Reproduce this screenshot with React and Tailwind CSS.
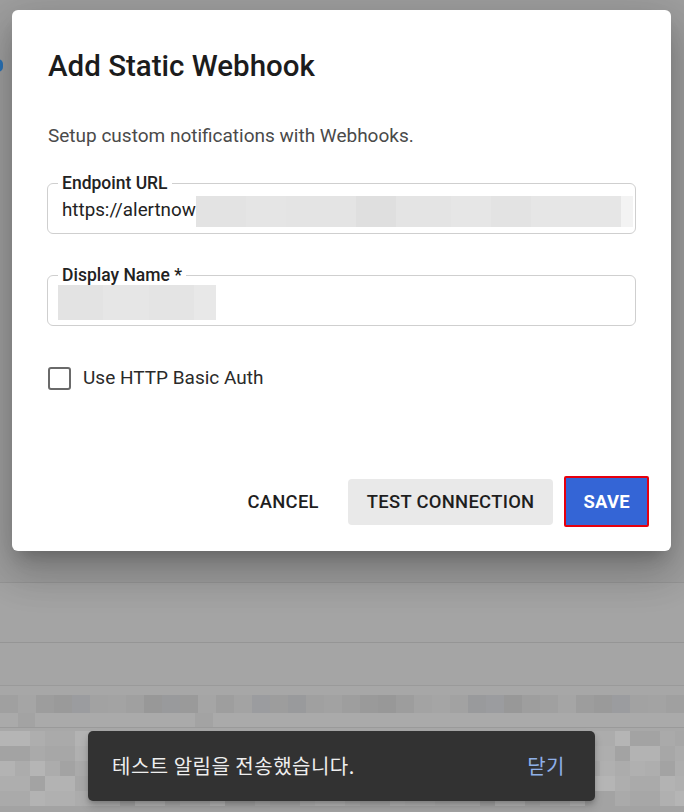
import React from "react";

const bandColors = [
  "bg-[#9d9d9d]", "bg-[#a2a2a2]", "bg-[#989898]", "bg-[#a5a5a5]", "bg-[#9b9c9f]",
  "bg-[#a0a0a0]", "bg-[#9a9a9a]", "bg-[#a3a3a3]", "bg-[#999a9c]", "bg-[#9e9e9e]",
];
const lightColors = [
  "bg-[#acacac]", "bg-[#b0b0b0]", "bg-[#a7a7a7]", "bg-[#b3b3b3]", "bg-[#aaaaaa]",
  "bg-[#a3a3a3]", "bg-[#aeaeae]", "bg-[#b5b5b5]",
];

function Mosaic({ cols, cellW, cellH, rows, palette, seed }) {
  const out = [];
  for (let r = 0; r < rows; r++) {
    const cells = [];
    for (let c = 0; c < cols; c++) {
      const idx = (c * 7 + r * 13 + seed * 5 + ((c * c + r) % 3)) % palette.length;
      cells.push(<div key={c} className={`shrink-0 ${palette[idx]} ${cellW}`} />);
    }
    out.push(
      <div key={r} className={`flex ${cellH}`}>
        {cells}
      </div>
    );
  }
  return <div className="flex flex-col">{out}</div>;
}

function Field({ label, children }) {
  return (
    <fieldset className="border border-[#cfcfcf] rounded-[6px] px-0 pb-[6px] m-0">
      <legend className="ml-[10px] px-[4px] text-[17.5px] leading-[20px] font-medium text-[#222]">
        {label}
      </legend>
      <div className="h-[34px] flex items-center">{children}</div>
    </fieldset>
  );
}

export default function App() {
  return (
    <div
      className="relative w-[684px] h-[812px] overflow-hidden bg-[#a3a3a3]"
      style={{ fontFamily: "Roboto, 'Noto Sans CJK KR', sans-serif" }}
    >
      {/* background page */}
      <div className="flex flex-col">
        <div className="h-[582px] bg-[#9f9f9f]" />
        <div className="h-[60px] border-t border-[#959595] bg-[#a4a4a4]" />
        <div className="h-[43px] border-t border-[#959595] bg-[#a5a5a5]" />
        <div className="h-[10px] border-t border-[#9a9a9a] bg-[#a7a7a7]" />
        <Mosaic cols={38} cellW="w-[18px]" cellH="h-[18px]" rows={1} palette={bandColors} seed={1} />
        <div className="h-[14px] bg-[#aaaaaa] flex">
          <div className="w-[18px]" />
          <div className="w-[17px] bg-[#a3a3a3]" />
          <div className="w-[160px]" />
          <div className="w-[18px] bg-[#a3a3a3]" />
        </div>
        <div className="h-[4px] border-t border-[#9a9a9a] bg-[#a8a8a8]" />
        <Mosaic cols={46} cellW="w-[15px]" cellH="h-[15px]" rows={5} palette={lightColors} seed={3} />
      </div>

      {/* partial icon at left edge */}
      <div className="absolute left-[-7px] top-[59px] w-[10px] h-[13px] rounded-full bg-[#2a73b8]" />

      {/* dialog */}
      <div className="absolute left-[12px] top-[10px] w-[659px] h-[541px] bg-white rounded-[6px] shadow-[0_11px_15px_-7px_rgba(0,0,0,0.2),0_24px_38px_3px_rgba(0,0,0,0.14),0_9px_46px_8px_rgba(0,0,0,0.12)] flex flex-col px-[35px] pt-[39px] pb-[24px]">
        <h2 className="pl-[1px] text-[29.5px] leading-[34px] font-medium text-[#1c1c1c]">
          Add Static Webhook
        </h2>
        <p className="mt-[41px] pl-[1px] text-[19px] leading-[24px] text-[#4a4a4a]">
          Setup custom notifications with Webhooks.
        </p>

        <div className="mt-[25px]">
          <Field label="Endpoint URL">
            <span className="pl-[14px] text-[18.8px] text-[#222] whitespace-nowrap">
              https://alertnow
            </span>
            <div className="flex h-[31px] mt-[3px] flex-1 pr-[2px]">
              <div className="w-[50px] bg-[#e3e3e3]" />
              <div className="w-[40px] bg-[#e5e5e5]" />
              <div className="w-[70px] bg-[#e4e4e4]" />
              <div className="w-[40px] bg-[#dfdfdf]" />
              <div className="w-[55px] bg-[#e4e4e4]" />
              <div className="w-[40px] bg-[#e6e6e6]" />
              <div className="w-[40px] bg-[#e3e3e3]" />
              <div className="w-[90px] bg-[#e6e6e6]" />
              <div className="flex-1 bg-[#f3f3f3]" />
            </div>
          </Field>
        </div>

        <div className="mt-[31px]">
          <Field label="Display Name *">
            <div className="ml-[10px] flex h-[35px]">
              <div className="w-[45px] bg-[#e3e3e3]" />
              <div className="w-[46px] bg-[#e6e6e6]" />
              <div className="w-[45px] bg-[#e4e4e4]" />
              <div className="w-[22px] bg-[#e8e8e8]" />
            </div>
          </Field>
        </div>

        <label className="mt-[40px] flex items-center gap-[12px] h-[24px]">
          <span className="ml-[1px] w-[23px] h-[23px] border-[2.5px] border-[#6a6a6a] rounded-[3px]" />
          <span className="text-[19px] text-[#2a2a2a]">Use HTTP Basic Auth</span>
        </label>

        <div className="mt-auto flex items-center justify-end gap-[11px] -mr-[13px]">
          <button className="h-[46px] px-[18px] rounded-[4px] text-[18.4px] font-medium tracking-[0.3px] text-[#1e1e1e]">
            CANCEL
          </button>
          <button className="h-[46px] px-[19px] rounded-[4px] bg-[#e9e9e9] text-[18.4px] font-medium tracking-[0.3px] text-[#1e1e1e]">
            TEST CONNECTION
          </button>
          <button className="h-[51px] px-[17px] rounded-[2px] border-[2px] border-[#e6000e] bg-[#3465d6] text-[18.4px] font-bold tracking-[0.3px] text-white">
            SAVE
          </button>
        </div>
      </div>

      {/* snackbar */}
      <div className="absolute left-[88px] top-[731px] w-[507px] h-[70px] bg-[#323232] rounded-[5px] shadow-[0_3px_5px_-1px_rgba(0,0,0,0.2),0_6px_10px_0_rgba(0,0,0,0.14)] flex items-center justify-between pl-[24px] pr-[30px]">
        <span
          className="text-[20px] tracking-[0.5px] text-[#eeeeee]"
          style={{ fontFamily: "'Noto Sans CJK KR', sans-serif" }}
        >
          테스트 알림을 전송했습니다.
        </span>
        <span
          className="text-[20px] tracking-[0.5px] text-[#8fb0e8]"
          style={{ fontFamily: "'Noto Sans CJK KR', sans-serif" }}
        >
          닫기
        </span>
      </div>
    </div>
  );
}
